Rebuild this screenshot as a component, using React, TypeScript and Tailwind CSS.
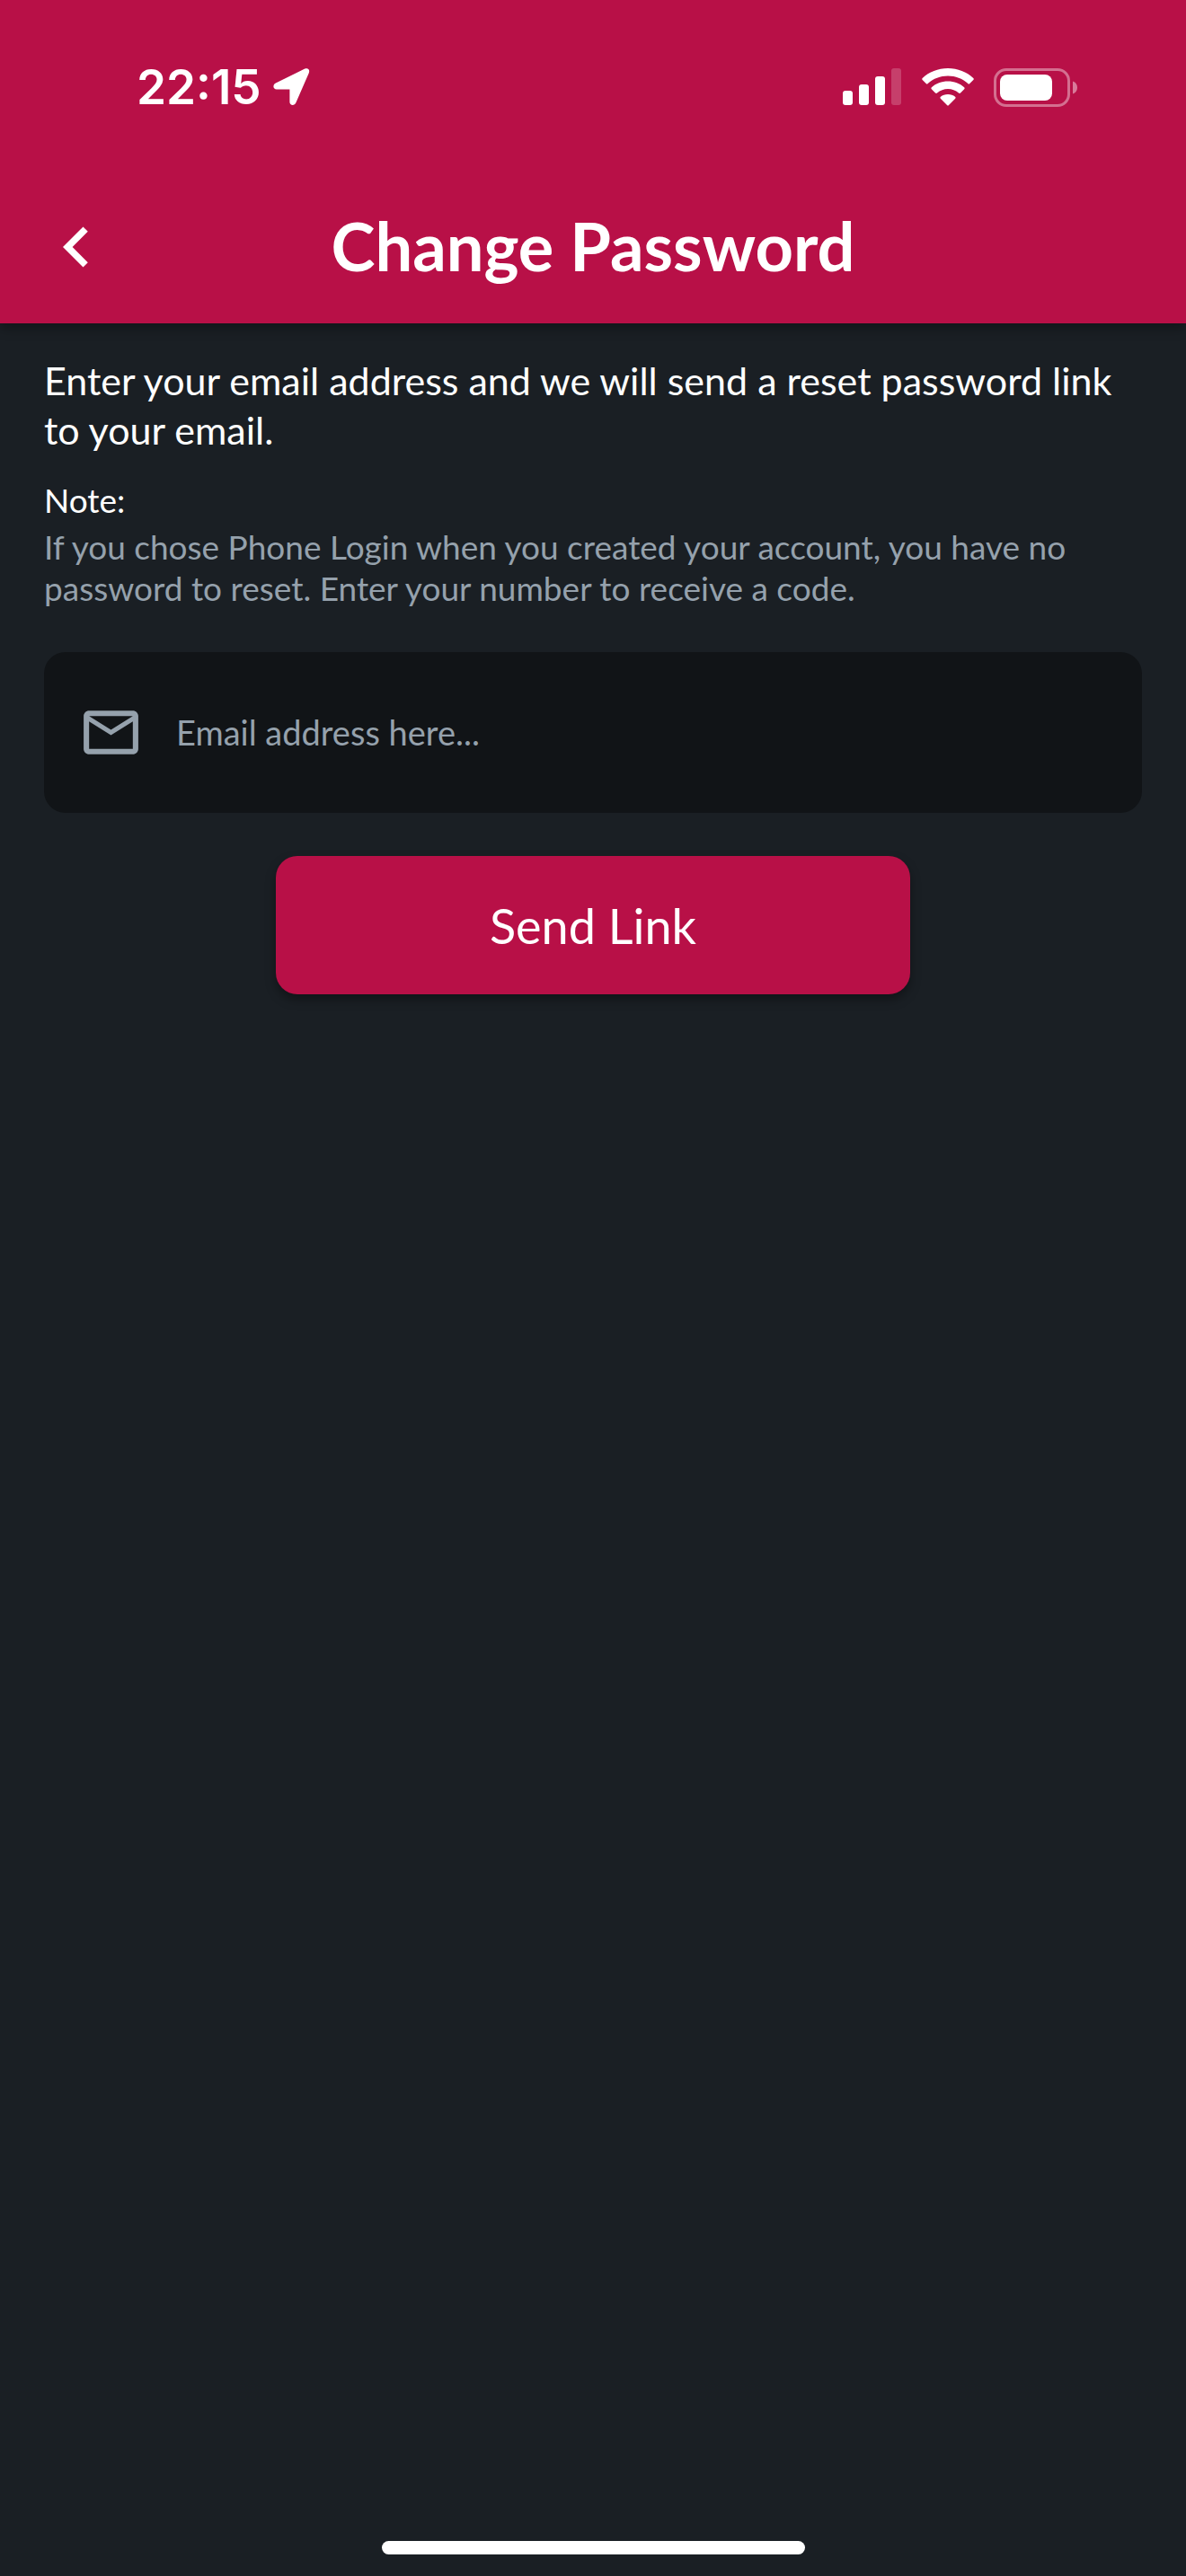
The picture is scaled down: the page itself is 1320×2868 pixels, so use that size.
import React from "react";
import { MdChevronLeft, MdMailOutline } from "react-icons/md";

function LocationArrow() {
  return (
    <svg className="h-11 w-11" viewBox="0 0 44 44" aria-hidden="true">
      <path
        d="M36.300 1.600 C39.800 0.200 42.200 2.800 40.800 6.200 L26.300 39.500 C24.700 43.200 19.400 42.600 19.400 38.500 V24.500 H4.800 C0.800 24.500 0.200 19.400 3.900 17.600 Z"
        fill="#ffffff"
      />
    </svg>
  );
}

function SignalIcon() {
  return (
    <svg className="h-[42px] w-[66px]" viewBox="0 0 66 42" aria-hidden="true" fill="#ffffff">
      <rect x="0" y="25" width="11" height="16" rx="3" />
      <rect x="18" y="18" width="11" height="23" rx="3" />
      <rect x="36" y="9" width="11" height="32" rx="3" />
      <rect x="54" y="0" width="11" height="41" rx="3" opacity="0.2" />
    </svg>
  );
}

function WifiIcon() {
  return (
    <svg className="h-[42px] w-[58px]" viewBox="0 0 58 42" aria-hidden="true" fill="#ffffff">
      <path d="M29 0 C40 0 50 4 57.300 11 Q58.300 12 57.300 13 L53.300 17 Q52.400 18 51.300 17 C45 11.500 37.500 8.600 29 8.600 C20.500 8.600 13 11.500 6.700 17 Q5.600 18 4.700 17 L0.700 13 Q-0.300 12 0.700 11 C8 4 18 0 29 0 Z" />
      <path d="M29 14.600 C36 14.600 42.300 17 47.200 21.300 Q48.200 22.300 47.200 23.300 L43 27.500 Q42 28.400 41 27.600 C37.500 24.600 33.500 23 29 23 C24.500 23 20.500 24.600 17 27.600 Q16 28.400 15 27.500 L10.800 23.300 Q9.800 22.300 10.800 21.300 C15.700 17 22 14.600 29 14.600 Z" />
      <path d="M29 29 C32.200 29 34.900 30 37.100 31.700 Q38.200 32.700 37.200 33.700 L30 41 Q29 42 28 41 L20.800 33.700 Q19.800 32.700 20.900 31.700 C23.100 30 25.800 29 29 29 Z" />
    </svg>
  );
}

function BatteryIcon() {
  return (
    <svg className="h-[43px] w-[94px]" viewBox="0 0 94 43" aria-hidden="true" fill="#ffffff">
      <rect x="1.500" y="1.500" width="82" height="40" rx="12.500" fill="none" stroke="#ffffff" strokeWidth="3" opacity="0.4" />
      <rect x="7" y="7" width="58" height="29" rx="8" />
      <path d="M88 14.500 C91 15.500 93 18 93 21.500 C93 25 91 27.500 88 28.500 Z" opacity="0.45" />
    </svg>
  );
}

function StatusBar() {
  return (
    <div className="flex h-[194px] items-center justify-between pr-[120px] pl-[152px]">
      <div className="flex items-center gap-3">
        <time className="font-['Inter',sans-serif] text-[53px] leading-none font-semibold">22:15</time>
        <LocationArrow />
      </div>
      <div className="flex items-center gap-[22px]">
        <SignalIcon />
        <WifiIcon />
        <BatteryIcon />
      </div>
    </div>
  );
}

export default function App() {
  return (
    <div className="flex min-h-screen flex-col bg-[#1a1f24] font-['Lato',sans-serif] text-white">
      <header className="bg-[#b81047] shadow-[0_6px_12px_rgba(0,0,0,0.3)]">
        <StatusBar />
        <div className="grid h-[166px] grid-cols-[90px_1fr_90px] items-start px-10">
          <button type="button" aria-label="Back" className="mt-9">
            <MdChevronLeft className="size-[90px]" />
          </button>
          <h1 className="mt-9 text-center text-[74px] leading-[88px] font-bold">Change Password</h1>
        </div>
      </header>

      <main className="flex-1 px-[49px] pt-9">
        <p className="text-[43px] leading-[55px]">
          Enter your email address and we will send a reset password link to your email.
        </p>
        <h2 className="mt-7 text-[37px] leading-[46px]">Note:</h2>
        <p className="mt-1.5 text-[37px] leading-[46px] text-[#95a1ac]">
          If you chose Phone Login when you created your account, you have no password to reset. Enter
          your number to receive a code.
        </p>

        <form onSubmit={(e) => e.preventDefault()}>
          <label className="mt-12 flex h-[179px] items-center gap-9 rounded-3xl bg-[#111417] px-[38px]">
            <MdMailOutline className="size-[73px] shrink-0 text-[#95a1ac]" aria-hidden="true" />
            <input
              type="email"
              aria-label="Email address"
              placeholder="Email address here..."
              className="min-w-0 flex-1 bg-transparent text-[38px] text-white outline-none placeholder:text-[#95a1ac]"
            />
          </label>
          <button
            type="submit"
            className="mx-auto mt-12 block h-[154px] w-[706px] max-w-full rounded-3xl bg-[#b81047] text-[54px] shadow-[0_6px_12px_rgba(0,0,0,0.35)]"
          >
            Send Link
          </button>
        </form>
      </main>

      <div className="flex justify-center pb-6">
        <div className="h-[15px] w-[471px] rounded-full bg-white" />
      </div>
    </div>
  );
}
